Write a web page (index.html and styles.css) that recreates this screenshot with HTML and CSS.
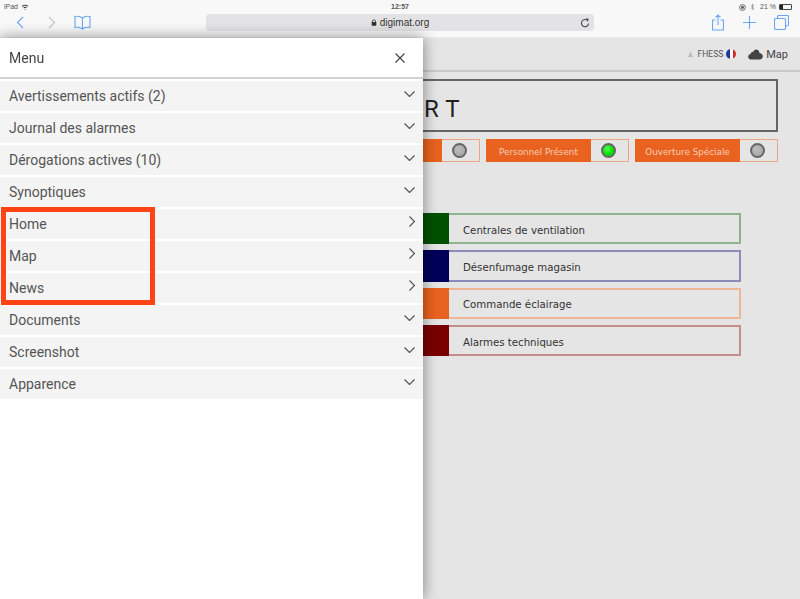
FILE: index.html
```html
<!DOCTYPE html>
<html lang="fr">
<head>
<meta charset="utf-8">
<title>Digimat</title>
<link rel="stylesheet" href="styles.css">
</head>
<body>
<div class="screen">
  <header class="browser">
    <div class="status">
      <div class="status-left">
        <span>iPad</span>
        <svg class="wifi" viewBox="0 0 10 8"><path d="M0.5 2.6C3 .3 7 .3 9.5 2.6L8.5 3.7C6.5 1.9 3.5 1.9 1.5 3.7ZM2.5 4.7C4 3.4 6 3.4 7.500 4.700L6.500 5.700C5.600 5 4.400 5 3.500 5.700ZM5 8L4 6.800C4.600 6.400 5.400 6.400 6 6.800Z"/></svg>
      </div>
      <span class="clock">12:57</span>
      <div class="status-right">
        <svg class="st-ico" viewBox="0 0 8 8"><circle cx="4" cy="4" r="3.3" fill="none" stroke="#555" stroke-width="1"/><circle cx="4" cy="4" r="1.700" fill="#555"/></svg>
        <svg class="st-ico bt" viewBox="0 0 6 9"><path d="M1 2.400L4.600 6.300 3 8V1L4.600 2.700 1 6.600" fill="none" stroke="#888" stroke-width=".8"/></svg>
        <span>21 %</span>
        <span class="battery"><span class="battery-fill"></span></span>
      </div>
    </div>
    <div class="toolbar">
      <div class="tools-left">
        <svg class="ico back" viewBox="0 0 8 13"><path d="M7 1L1.500 6.500 7 12"/></svg>
        <svg class="ico forward" viewBox="0 0 8 13"><path d="M1 1L6.500 6.500 1 12"/></svg>
        <svg class="ico book" viewBox="0 0 17 15"><path d="M8.500 3C7 1.500 4 1 1 1.500V12.500C4 12 7 12.500 8.500 14 10 12.500 13 12 16 12.500V1.500C13 1 10 1.500 8.500 3ZM8.500 3V14"/></svg>
      </div>
      <div class="address">
        <svg class="lock" viewBox="0 0 7 8"><path d="M1.700 3.500V2.300C1.700 .4 5.300 .4 5.300 2.300V3.500" fill="none" stroke="#333" stroke-width=".9"/><rect x=".8" y="3.400" width="5.400" height="4.300" rx=".5" fill="#333"/></svg>
        <span>digimat.org</span>
        <svg class="reload" viewBox="0 0 10 10"><path d="M7.900 3A3.600 3.600 0 1 0 8.600 5.500" fill="none" stroke="#444" stroke-width="1.100"/><path d="M5.800 .3L8.600 .8 8 3.700Z" fill="#444"/></svg>
      </div>
      <div class="tools-right">
        <svg class="ico share" viewBox="0 0 12 17"><path d="M3.500 6H.5V16H11.500V6H8.500M6 11V1M3.500 3.300L6 1 8.500 3.300"/></svg>
        <svg class="ico plus" viewBox="0 0 13 13"><path d="M6.500 0V13M0 6.500H13"/></svg>
        <svg class="ico tabs" viewBox="0 0 15 15"><path d="M3.500 3.500V1.700C3.500 1 4 .5 4.700 .5H13C13.800 .5 14.500 1 14.500 1.700V9.500C14.500 10.400 14 11 13 11H11.500"/><rect x=".5" y="3.500" width="11" height="11" rx="1.200"/></svg>
      </div>
    </div>
  </header>

  <main class="page">
    <div class="page-top">
      <svg class="user" viewBox="0 0 6 7"><path d="M3 0L4.200 3.600 6 7H0L1.800 3.600Z" fill="#bbb"/></svg>
      <span class="user-name">FHESS</span>
      <span class="flag"><i class="flag-b"></i><i class="flag-w"></i><i class="flag-r"></i></span>
      <span class="map-link">
        <svg class="cloud" viewBox="0 0 16 12"><path d="M3.500 11.500C1.500 11.500 0 10.200 0 8.400 0 6.700 1.200 5.600 2.700 5.400 3 3.600 4.300 2.700 5.500 2.900 6.300 1.200 7.700 .3 9.200 .5 11 .8 12.200 2.200 12.300 4.300 14.500 4.600 16 6 16 8 16 10 14.500 11.500 12.500 11.500Z" fill="#444"/></svg>
        Map
      </span>
    </div>
    <div class="content">
      <div class="title-box"><span class="title-text">R T</span></div>
      <div class="state-row">
        <div class="state"><span class="state-label">Mode</span><span class="state-light"><i class="led"></i></span></div>
        <div class="state"><span class="state-label">Personnel Présent</span><span class="state-light"><i class="led led-on"></i></span></div>
        <div class="state"><span class="state-label">Ouverture Spéciale</span><span class="state-light"><i class="led"></i></span></div>
      </div>
      <div class="cards">
        <div class="card card-green"><i class="card-swatch"></i><span>Centrales de ventilation</span></div>
        <div class="card card-navy"><i class="card-swatch"></i><span>Désenfumage magasin</span></div>
        <div class="card card-orange"><i class="card-swatch"></i><span>Commande éclairage</span></div>
        <div class="card card-red"><i class="card-swatch"></i><span>Alarmes techniques</span></div>
      </div>
    </div>

    <aside class="drawer">
      <div class="drawer-head">
        <span>Menu</span>
        <svg class="close" viewBox="0 0 10 10"><path d="M.5 .5L9.500 9.500M9.500 .5L.5 9.500"/></svg>
      </div>
      <ul class="menu">
        <li class="menu-item"><span>Avertissements actifs (2)</span><svg class="chev" viewBox="0 0 11 6"><path d="M.5 .5L5.500 5.500 10.500 .5"/></svg></li>
        <li class="menu-item"><span>Journal des alarmes</span><svg class="chev" viewBox="0 0 11 6"><path d="M.5 .5L5.500 5.500 10.500 .5"/></svg></li>
        <li class="menu-item"><span>Dérogations actives (10)</span><svg class="chev" viewBox="0 0 11 6"><path d="M.5 .5L5.500 5.500 10.500 .5"/></svg></li>
        <li class="menu-item"><span>Synoptiques</span><svg class="chev" viewBox="0 0 11 6"><path d="M.5 .5L5.500 5.500 10.500 .5"/></svg></li>
        <li class="menu-item"><span>Home</span><svg class="chev-r" viewBox="0 0 6 11"><path d="M.5 .5L5.500 5.500 .5 10.500"/></svg></li>
        <li class="menu-item"><span>Map</span><svg class="chev-r" viewBox="0 0 6 11"><path d="M.5 .5L5.500 5.500 .5 10.500"/></svg></li>
        <li class="menu-item"><span>News</span><svg class="chev-r" viewBox="0 0 6 11"><path d="M.5 .5L5.500 5.500 .5 10.500"/></svg></li>
        <li class="menu-item"><span>Documents</span><svg class="chev" viewBox="0 0 11 6"><path d="M.5 .5L5.500 5.500 10.500 .5"/></svg></li>
        <li class="menu-item"><span>Screenshot</span><svg class="chev" viewBox="0 0 11 6"><path d="M.5 .5L5.500 5.500 10.500 .5"/></svg></li>
        <li class="menu-item"><span>Apparence</span><svg class="chev" viewBox="0 0 11 6"><path d="M.5 .5L5.500 5.500 10.500 .5"/></svg></li>
      </ul>
      <div class="highlight"></div>
    </aside>
  </main>
</div>
</body>
</html>
```
FILE: styles.css
```css
* { box-sizing: border-box; }
html, body { margin: 0; height: 100%; overflow: hidden; }
body { font-family: "Roboto", "Liberation Sans", sans-serif; color: #444; background: #e5e5e5; }
.screen { width: 800px; height: 599px; display: flex; flex-direction: column; filter: blur(.35px); }

/* Browser chrome */
.browser { height: 38px; background: #f8f8f8; border-bottom: 1px solid #ececec; flex: none; }
.status { height: 11px; padding: 2px 4px 0; display: grid; grid-template-columns: 1fr auto 1fr; align-items: center; font: 7px/10px "Liberation Sans", sans-serif; color: #555; }
.status-left { display: flex; align-items: center; gap: 3px; }
.wifi { width: 8px; height: 6px; fill: #444; }
.clock { font-weight: 700; color: #555; }
.status-right { display: flex; align-items: center; justify-content: flex-end; gap: 3px; padding-right: 4px; }
.st-ico { width: 7px; height: 7px; }
.st-ico.bt { width: 5px; height: 8px; margin: 0 2px 0 1px; }
.battery { width: 13px; height: 6px; border: 1px solid #444; border-radius: 1px; display: block; }
.battery-fill { width: 3px; height: 100%; background: #222; display: block; }
.toolbar { height: 26px; display: flex; align-items: flex-start; padding-top: 3px; }
.ico { fill: none; stroke: #6aa5f6; stroke-width: 1.100; display: block; }
.tools-left { width: 206px; flex: none; display: flex; align-items: center; height: 17px; padding-left: 16px; }
.back { width: 8px; height: 13px; }
.forward { width: 8px; height: 13px; margin-left: 24px; stroke: #c4c4c6; }
.book { width: 17px; height: 15px; margin-left: 18px; }
.address { width: 388px; height: 17px; flex: none; background: #e3e3e5; border-radius: 4px; position: relative; display: flex; align-items: center; justify-content: center; gap: 3px; font: 10px/17px "Liberation Sans", sans-serif; color: #333; }
.lock { width: 6px; height: 7px; }
.reload { width: 10px; height: 10px; position: absolute; right: 4px; top: 4px; }
.tools-right { flex: 1; display: flex; align-items: center; height: 17px; padding-left: 118px; }
.share { width: 12px; height: 17px; margin-top: -1px; }
.plus { width: 13px; height: 13px; margin-left: 19px; }
.tabs { width: 15px; height: 15px; margin-left: 18px; }

/* Page */
.page { position: relative; flex: 1; background: #e5e5e5; }
.page-top { height: 34px; border-bottom: 2px solid #c9c9c9; display: flex; align-items: center; justify-content: flex-end; padding-right: 12px; }
.user { width: 5px; height: 6px; margin-right: 5px; }
.user-name { font-size: 8.500px; color: #555; margin-right: 3px; }
.flag { width: 10px; height: 10px; border-radius: 50%; overflow: hidden; display: flex; }
.flag i { flex: 1; display: block; }
.flag-b { background: #1b3a94; }
.flag-w { background: #f5f5f5; }
.flag-r { background: #d22b2b; }
.map-link { display: flex; align-items: center; gap: 3px; margin-left: 12px; font-size: 11px; color: #444; }
.cloud { width: 15px; height: 11px; }
.content { padding: 7px 22px 0 337px; display: flex; flex-direction: column; }
.title-box { height: 53px; border: 2px solid #666; padding: 6px 0 0 85px; display: flex; align-items: center; font: 24px "Roboto", sans-serif; color: #222; }
.title-text { word-spacing: 1px; }
.state-row { display: flex; justify-content: space-between; margin-top: 7px; }
.state { width: 143px; height: 23px; border: 1px solid #eca685; display: flex; }
.state-label { width: 105px; margin: -1px 0 -1px -1px; background: #ea621f; color: #f6cdb6; font: 8.800px/26px "DejaVu Sans", sans-serif; text-align: center; }
.state-light { flex: 1; display: flex; align-items: center; justify-content: center; padding-right: 3px; }
.led { width: 15px; height: 15px; border-radius: 50%; border: 2px solid #666; background: radial-gradient(circle at 40% 35%, #bbb, #a2a2a2); display: block; }
.led-on { background: radial-gradient(circle at 40% 35%, #5f5, #0d0 60%); }
.cards { display: flex; flex-direction: column; gap: 6px; margin: 51px 37px 0 58px; }
.card { height: 31.300px; border: 2px solid; border-left: 0; display: flex; align-items: center; font: 10.200px "DejaVu Sans", sans-serif; color: #333; }
.card span { padding-top: 3px; }
.card-swatch { width: 54px; align-self: stretch; margin: -2px 14px -2px 0; display: block; }
.card-green { border-color: #8fb28f; }
.card-green .card-swatch { background: #005000; }
.card-navy { border-color: #8c8cb8; }
.card-navy .card-swatch { background: #000058; }
.card-orange { border-color: #eeb597; }
.card-orange .card-swatch { background: #ea621f; }
.card-red { border-color: #c48e8e; }
.card-red .card-swatch { background: #7a0000; }

/* Drawer */
.drawer { position: absolute; left: 0; top: 0; bottom: 0; width: 423px; background: #fff; box-shadow: 0 0 14px rgba(0,0,0,.45); }
.drawer-head { height: 41px; border-bottom: 2px solid #d2d2d2; display: flex; align-items: center; justify-content: space-between; padding: 0 18px 0 9px; font-size: 14px; color: #444; }
.close { width: 10px; height: 10px; fill: none; stroke: #444; stroke-width: 1.200; }
.menu { list-style: none; margin: 2px 0 0; padding: 0; display: flex; flex-direction: column; gap: 2px; }
.menu-item { height: 30px; background: #f4f4f4; display: flex; align-items: center; justify-content: space-between; padding: 0 8px 1px 9px; font-size: 14px; color: #555; }
.chev { width: 11px; height: 6px; fill: none; stroke: #555; stroke-width: 1.200; margin-top: -4px; }
.chev-r { width: 6px; height: 11px; fill: none; stroke: #555; stroke-width: 1.200; margin-top: -5px; }
.highlight { position: absolute; left: 1px; top: 169px; width: 154px; height: 98px; border: 5px solid #ff4314; }
```
